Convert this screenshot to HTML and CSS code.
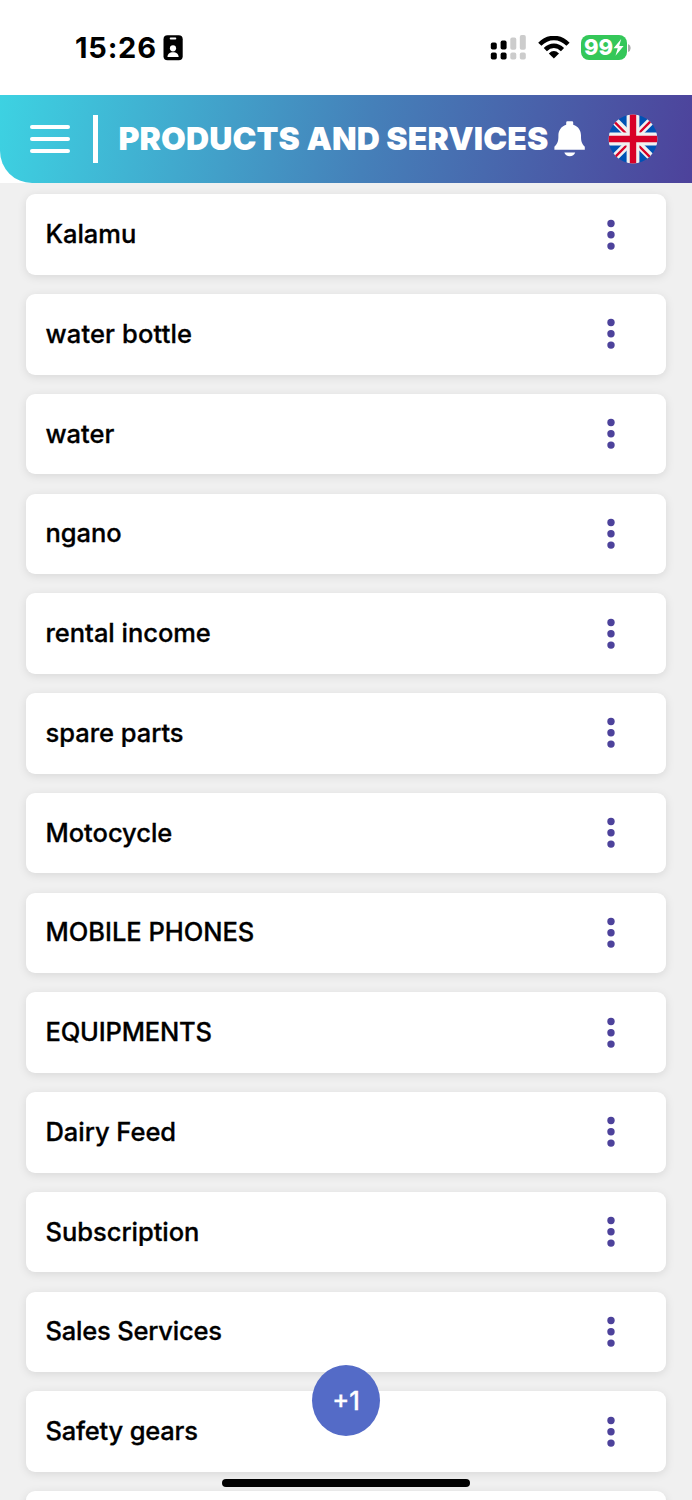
FILE: index.html
```html
<!DOCTYPE html>
<html lang="en">
<head>
<meta charset="utf-8">
<title>Products and Services</title>
<link rel="stylesheet" href="styles.css">
</head>
<body>
<svg width="0" height="0" class="defs"><symbol id="dots" viewBox="0 0 8 32"><g fill="#4d429b"><circle cx="4" cy="4.5" r="3.7"/><circle cx="4" cy="15.8" r="3.7"/><circle cx="4" cy="27.1" r="3.7"/></g></symbol></svg>
<div class="screen">
  <div class="status">
    <div class="clock">
      <span class="time">15:26</span>
      <svg class="badge" width="20" height="26" viewBox="0 0 20 26">
        <rect x=".5" y=".2" width="19.2" height="25" rx="4" fill="#000"/>
        <rect x="6.7" y="2.5" width="6.6" height="2" rx="1" fill="#fff"/>
        <circle cx="10" cy="13.3" r="3.1" fill="#fff"/>
        <path d="M4.5 22.1C4.5 19.1 6.5 17.3 10 17.3S15.6 19.1 15.6 22.1Z" fill="#fff"/>
      </svg>
    </div>
    <div class="indicators">
      <svg width="36" height="26" viewBox="0 0 36 26">
        <g fill="#000"><rect x=".8" y="7.6" width="6" height="7" rx="1.8"/><rect x=".8" y="17.6" width="6" height="7" rx="1.8"/><rect x="10.6" y="5.6" width="6" height="9" rx="1.8"/><rect x="10.6" y="17.6" width="6" height="7" rx="1.8"/></g>
        <g fill="#ccc"><rect x="20.3" y="2.6" width="6" height="12.2" rx="1.8"/><rect x="20.3" y="17.6" width="6" height="7" rx="1.8"/><rect x="29.8" y=".1" width="6" height="14.7" rx="1.8"/><rect x="29.8" y="17.6" width="6" height="7" rx="1.8"/></g>
      </svg>
      <svg class="wifi" width="32" height="24" viewBox="0 0 32 24">
        <g fill="none" stroke="#000" stroke-width="4.4"><path d="M1.8 8.3C9.8-.2 22-.2 30 8.3"/><path d="M7.3 13.6C12.4 8.4 19.4 8.4 24.5 13.6"/></g>
        <path d="M10.8 17.4Q15.9 12.6 21 17.4L15.9 22.5Z"/>
      </svg>
      <div class="battery"><span>99</span><svg width="11" height="17" viewBox="0 0 11 17"><path d="M8.2 0L.5 9.2H4.7L2.5 16.8L10.6 7H6.2Z" fill="#fff"/></svg></div>
      <svg class="tip" width="3" height="8" viewBox="0 0 3 8"><path d="M0 0Q2.7 1 2.7 4T0 8Z" fill="#aaa"/></svg>
    </div>
  </div>
  <header class="header">
    <div class="bars"><i></i><i></i><i></i></div>
    <div class="divider"></div>
    <h1 class="title">PRODUCTS AND SERVICES</h1>
    <svg class="bell" width="32" height="36" viewBox="0 0 32 36">
      <path d="M12.2 1.5Q12.2.3 13.4.3H18Q19.2.3 19.2 1.5V3.7C24.5 5.3 27 9.6 27 14.5C27 20 27.4 22 30.8 25.8V28.8H.4V25.8C4 22 4.4 20 4.4 14.5C4.4 9.6 7 5.3 12.2 3.7Z" fill="#fff"/>
      <path d="M10.3 31.5H21.2C20 36.4 11.5 36.4 10.3 31.5Z" fill="#fff"/>
    </svg>
    <svg class="flag" width="50" height="50" viewBox="0 0 50 50">
      <defs><clipPath id="disc"><circle cx="25" cy="25" r="24.4"/></clipPath></defs>
      <g clip-path="url(#disc)">
        <rect width="50" height="50" fill="#0052b4"/>
        <path d="M0 0L50 50M50 0L0 50" stroke="#f0f0f0" stroke-width="7.6"/>
        <path d="M5.7 7.2L20 21.5M30 20L44.3 5.7M20 30L5.7 44.3M29 30L43.3 44.3" stroke="#d80027" stroke-width="2.4"/>
        <path d="M25 0V50M0 25H50" stroke="#f0f0f0" stroke-width="12.8"/>
        <path d="M25 0V50M0 25H50" stroke="#d80027" stroke-width="6.4"/>
      </g>
    </svg>
  </header>
  <main class="list">
    <div class="card"><span>Kalamu</span><svg class="dots"><use href="#dots"/></svg></div>
    <div class="card"><span class="loose">water bottle</span><svg class="dots"><use href="#dots"/></svg></div>
    <div class="card"><span>water</span><svg class="dots"><use href="#dots"/></svg></div>
    <div class="card"><span>ngano</span><svg class="dots"><use href="#dots"/></svg></div>
    <div class="card"><span>rental income</span><svg class="dots"><use href="#dots"/></svg></div>
    <div class="card"><span>spare parts</span><svg class="dots"><use href="#dots"/></svg></div>
    <div class="card"><span>Motocycle</span><svg class="dots"><use href="#dots"/></svg></div>
    <div class="card"><span>MOBILE PHONES</span><svg class="dots"><use href="#dots"/></svg></div>
    <div class="card"><span class="tight">EQUIPMENTS</span><svg class="dots"><use href="#dots"/></svg></div>
    <div class="card"><span>Dairy Feed</span><svg class="dots"><use href="#dots"/></svg></div>
    <div class="card"><span>Subscription</span><svg class="dots"><use href="#dots"/></svg></div>
    <div class="card"><span class="tight">Sales Services</span><svg class="dots"><use href="#dots"/></svg></div>
    <div class="card"><span class="tight">Safety gears</span><svg class="dots"><use href="#dots"/></svg></div>
    <div class="card"></div>
  </main>
  <div class="add">+1</div>
  <div class="home"></div>
</div>
</body>
</html>
```
FILE: styles.css
```css
* { box-sizing: border-box; }
body { margin: 0; background: #fff; color: #000; font-family: Inter, "Liberation Sans", sans-serif; }
.defs { display: none; }
.screen { position: relative; width: 692px; height: 1500px; overflow: hidden; display: flex; flex-direction: column; }
.status { flex: none; height: 95px; padding: 0 61px 0 75px; display: flex; justify-content: space-between; align-items: center; }
.clock { display: flex; align-items: center; gap: 7px; }
.time { width: 81px; font-size: 29px; font-weight: 700; letter-spacing: .8px; line-height: 34px; white-space: nowrap; }
.indicators { display: flex; align-items: center; }
.wifi { margin: 0 11px 0 12px; }
.battery { width: 46px; height: 25px; border-radius: 8px; background: #34c759; color: #fff; display: flex; align-items: center; justify-content: center; font-size: 22px; font-weight: 800; line-height: 25px; }
.tip { margin-left: 1px; }
.header { flex: none; height: 87.5px; padding: 0 34px 0 30px; display: flex; align-items: center; border-bottom-left-radius: 32px; background: linear-gradient(100deg, #3dd2e2, #4580b9 53%, #4d429b); }
.bars { width: 40px; display: flex; flex-direction: column; gap: 8px; }
.bars i { height: 4px; border-radius: 2px; background: #fff; }
.divider { width: 5px; height: 48px; margin: 0 20.5px 0 23px; background: #fff; }
.title { margin: 1px 0 0; width: 435px; color: #fff; font-size: 32px; font-weight: 900; letter-spacing: .1px; line-height: 40px; white-space: nowrap; }
.bell { flex: none; }
.flag { flex: none; margin-left: auto; }
.list { flex: 1; min-height: 0; overflow: hidden; padding: 11.8px 26px 0; background: #f0f0f0; display: flex; flex-direction: column; gap: 19.25px; }
.card { flex: none; height: 80.5px; padding: 0 51px 0 19.5px; border-radius: 9px; background: #fff; box-shadow: 0 2px 10px rgba(0, 0, 0, .1); display: flex; align-items: center; justify-content: space-between; font-size: 25.5px; font-weight: 500; -webkit-text-stroke: .3px currentColor; line-height: 32px; }
.card span { padding-bottom: 1px; letter-spacing: -.03px; }
.card .tight { letter-spacing: -.2px; }
.card .loose { letter-spacing: .15px; }
.dots { width: 8px; height: 32px; }
.add { position: absolute; left: 312px; top: 1365px; width: 68px; height: 71px; border-radius: 50%; background: #546bc7; color: #fff; display: flex; align-items: center; justify-content: center; font-size: 25.5px; font-weight: 500; -webkit-text-stroke: .3px currentColor; }
.home { position: absolute; left: 222px; top: 1479px; width: 248px; height: 8px; border-radius: 4px; background: #000; }
```
